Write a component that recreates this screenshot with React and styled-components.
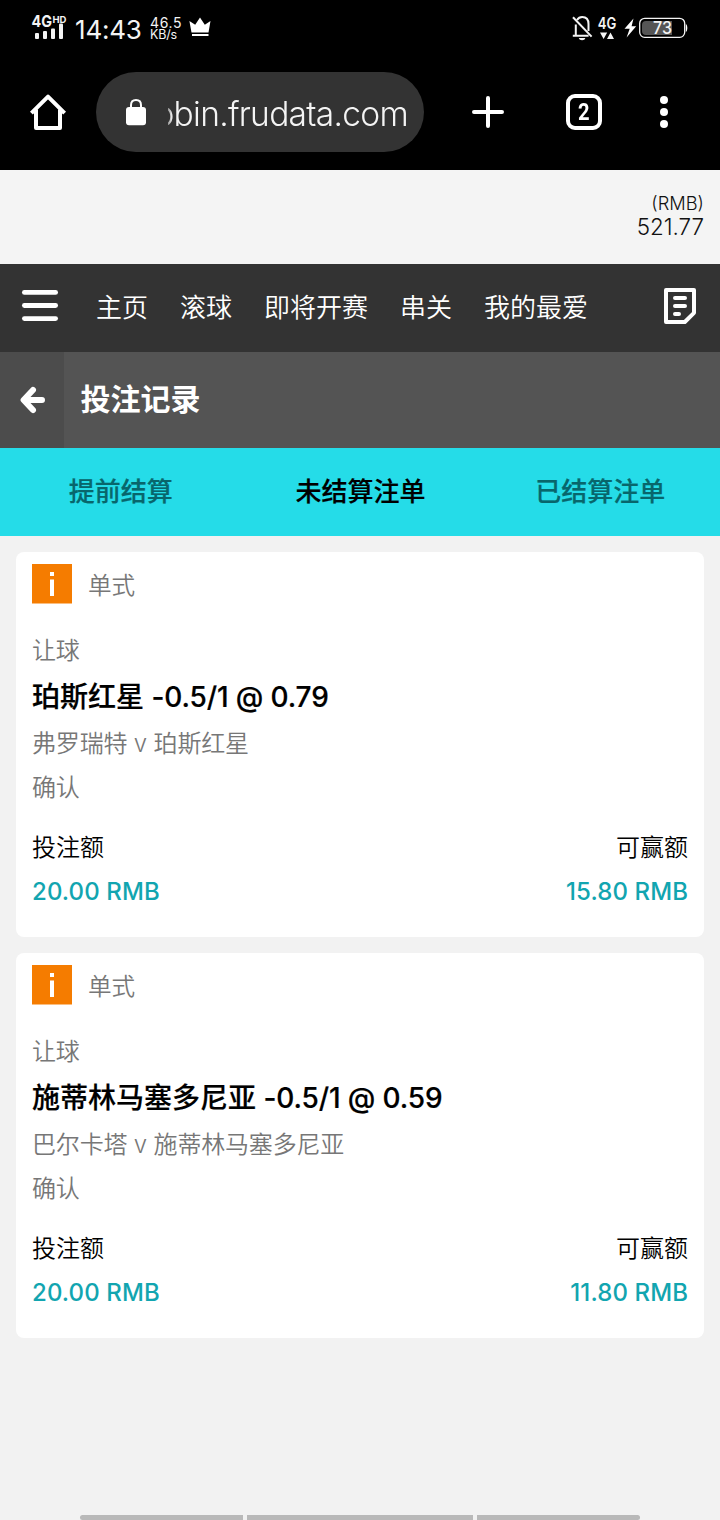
import React from "react";
import styled, { createGlobalStyle } from "styled-components";

const GlobalStyle = createGlobalStyle`
  *, *::before, *::after { box-sizing: border-box; }
  html, body { margin: 0; padding: 0; background: #f2f2f2; }
  body { font-family: Inter, "Noto Sans CJK SC", sans-serif; }
  svg { display: block; flex: none; overflow: visible; }
  button { border: 0; padding: 0; margin: 0; background: none; font: inherit; color: inherit; }
`;

const Screen = styled.div`
  width: 720px;
  height: 1520px;
  display: flex;
  flex-direction: column;
  background: #f2f2f2;
  overflow: hidden;
`;

const StatusBar = styled.header`
  height: 56px;
  padding: 0 31px;
  display: flex;
  justify-content: space-between;
  align-items: center;
  background: #000;
  color: #f4f4f4;
`;

const StatusGroup = styled.div`
  display: flex;
  align-items: center;
  height: 56px;
`;

const PowerGroup = styled.div`
  display: flex;
  align-items: center;
  gap: 2px;
`;

const ConnectionGroup = styled.div`
  display: flex;
  align-items: center;
  gap: 4px;
  margin-right: 7px;
`;

const Clock = styled.time`
  width: 67px;
  margin: 3px 8px 0 8px;
  font-size: 26px;
  line-height: 32px;
  letter-spacing: -0.2px;
  white-space: nowrap;
`;

const Speed = styled.div`
  width: 33px;
  margin-right: 6px;
  display: flex;
  flex-direction: column;
  padding-top: 2px;
  line-height: 12.5px;
  white-space: nowrap;
`;

const SpeedValue = styled.span`
  font-size: 14px;
  letter-spacing: 0.6px;
`;

const SpeedUnit = styled.span`
  font-size: 12.5px;
  letter-spacing: -0.2px;
`;

const BrowserBar = styled.div`
  height: 114px;
  padding: 16px 32px 18px 24px;
  display: flex;
  align-items: center;
  background: #000;
  color: #fff;
`;

const IconButton = styled.button`
  flex: none;
  width: 48px;
  height: 48px;
  margin-right: ${(p) => p.$gap || 0}px;
  display: flex;
  align-items: center;
  justify-content: center;
`;

const AddressPill = styled.div`
  flex: none;
  width: 328px;
  height: 80px;
  margin-right: 40px;
  padding: 0 16px 0 29px;
  display: flex;
  align-items: center;
  border-radius: 40px;
  background: #333;
`;

const Url = styled.div`
  width: 240px;
  margin-left: 21px;
  display: flex;
  justify-content: flex-end;
  overflow: hidden;
  color: #f4f4f4;
  font-size: 33.5px;
  font-weight: 300;
  line-height: 44px;
  letter-spacing: -0.7px;
  padding-top: 4px;
  white-space: nowrap;
  mask-image: linear-gradient(to right, rgba(0, 0, 0, 0.5) 0, #000 4px);
`;

const Balance = styled.section`
  height: 94px;
  padding: 22px 16px 0;
  display: flex;
  flex-direction: column;
  align-items: flex-end;
  background: #f4f4f4;
  color: #111;
  font-weight: 300;
`;

const Currency = styled.span`
  font-size: 18.3px;
  line-height: 23px;
`;

const Amount = styled.span`
  font-size: 22.4px;
  line-height: 24px;
`;

const NavBar = styled.nav`
  height: 88px;
  padding: 0 24px 4px 22px;
  display: flex;
  align-items: center;
  background: #333;
  color: #fff;
`;

const NavLinks = styled.div`
  flex: 1;
  display: flex;
  gap: 32px;
  margin-left: 38px;
  padding-top: 4px;
`;

const NavLink = styled.a`
  font-size: 26px;
  font-weight: 350;
  line-height: 40px;
  white-space: nowrap;
`;

const TitleBar = styled.div`
  height: 96px;
  display: flex;
  background: #545454;
  color: #fff;
`;

const BackButton = styled.button`
  width: 64px;
  height: 96px;
  padding-left: 2px;
  display: flex;
  align-items: center;
  justify-content: center;
  background: #4c4c4c;
`;

const Title = styled.h1`
  margin: 0 0 0 16.5px;
  font-size: 30px;
  font-weight: 700;
  line-height: 94px;
`;

const Tabs = styled.div`
  height: 88px;
  padding-left: 1px;
  display: grid;
  grid-template-columns: repeat(3, 1fr);
  background: #25dce8;
`;

const Tab = styled.button`
  height: 87px;
  font-size: 26px;
  font-weight: 500;
  line-height: 87px;
  text-align: center;
  color: ${(p) => (p.$active ? "#000" : "#08666c")};
  -webkit-text-stroke: 0.2px currentColor;
`;

const BetList = styled.main`
  flex: 1;
  padding: 16px;
  display: flex;
  flex-direction: column;
  gap: 16px;
`;

const Card = styled.article`
  height: 385px;
  padding: 12px 16px 23px;
  border-radius: 8px;
  background: #fff;
`;

const CardHead = styled.div`
  height: 65px;
  display: flex;
  gap: 16px;
`;

const BetType = styled.span`
  color: #777;
  font-size: 23.6px;
  font-weight: 350;
  line-height: 43px;
`;

const Line = styled.div`
  height: 44px;
  color: #777;
  font-size: 24px;
  font-weight: 350;
  line-height: 44px;
  letter-spacing: -0.18px;
  white-space: nowrap;
`;

const Selection = styled.h2`
  height: 49px;
  margin: 0;
  color: #000;
  font-size: 28px;
  font-weight: 500;
  line-height: 49px;
  white-space: nowrap;
  -webkit-text-stroke: 0.2px currentColor;
`;

const Odds = styled.span`
  letter-spacing: -0.12px;
`;

const Stakes = styled.div`
  margin-top: 16px;
  display: flex;
  justify-content: space-between;
`;

const Stake = styled.div`
  display: flex;
  flex-direction: column;
  align-items: ${(p) => (p.$end ? "flex-end" : "flex-start")};
`;

const StakeLabel = styled.span`
  color: #000;
  font-size: 24px;
  font-weight: 350;
  line-height: 44px;
`;

const StakeValue = styled.span`
  color: #12a5b0;
  font-size: 24px;
  font-weight: 500;
  line-height: 44px;
  letter-spacing: 0.1px;
`;

const GestureBar = styled.footer`
  height: 5px;
  padding: 0 80px;
  display: grid;
  grid-template-columns: 163px 226px 163px;
  gap: 4px;
`;

const GestureSegment = styled.span`
  background: #b9b9b9;
  border-radius: ${(p) => p.$radius || "0"};
`;

const SignalIcon = () => (
  <svg width="36" height="28" viewBox="0 0 36 28" fill="#f4f4f4">
    <text x="0.5" y="13" fontFamily="Inter" fontSize="16.500" fontWeight="700" textLength="20.500" lengthAdjust="spacingAndGlyphs">4G</text>
    <text x="21.500" y="8.500" fontFamily="Inter" fontSize="9.500" fontWeight="700" textLength="14" lengthAdjust="spacingAndGlyphs">HD</text>
    <rect x="4" y="19" width="4" height="6" rx="1" />
    <rect x="12" y="17" width="4" height="8" rx="1" />
    <rect x="20" y="14.500" width="4" height="10.500" rx="1" />
    <rect x="28" y="9.500" width="4" height="15.500" rx="1" />
  </svg>
);

const CrownIcon = () => (
  <svg width="24" height="22" viewBox="0 0 24 22" fill="#fff">
    <path d="M.4 4 6.200 7.800 11 .5l4.800 7.300L21.500 4l-2 11.500h-17z" />
    <rect x="3" y="17" width="16.500" height="2" />
  </svg>
);

const MuteIcon = () => (
  <svg width="21" height="26" viewBox="0 0 21 26" fill="none" stroke="#f4f4f4" strokeWidth="2">
    <path d="M.8 20.800h15.800M3.800 20.500V9.500M5 5C6.300 2.900 7.800 2 10.200 2c4 0 6.300 2.800 6.300 7v7" />
    <path d="M1 2.200 19.600 21.600" />
    <path d="M6.800 23h6.500c-.4 1.600-1.500 2.200-3.200 2.200S7.200 24.600 6.800 23z" fill="#f4f4f4" stroke="none" />
  </svg>
);

const NetworkIcon = () => (
  <svg width="20" height="26" viewBox="0 0 20 26" fill="#f4f4f4">
    <text x="0.800" y="14" fontFamily="Inter" fontSize="15.800" fontWeight="600" textLength="18.500" lengthAdjust="spacingAndGlyphs">4G</text>
    <path d="M3 17.500h7.200L6.600 24zM10 24h7l-3.500-6.500z" />
  </svg>
);

const BoltIcon = () => (
  <svg width="13" height="20" viewBox="0 0 13 20" fill="#fff">
    <path d="M9.500.500.500 10.800h5.200L2.600 19.500l9.600-11.300H7.600z" />
  </svg>
);

const BatteryIcon = () => (
  <svg width="50" height="22" viewBox="0 0 50 22">
    <rect x="0.700" y="1.300" width="45" height="19" rx="5" fill="none" stroke="#f4f4f4" strokeWidth="1.300" />
    <path d="M7 4h26v14H7a4 4 0 0 1-4-4V8a4 4 0 0 1 4-4z" fill="#555" />
    <path d="M46.800 7c2 1 2 7 0 8z" fill="#fff" />
    <text x="14" y="17" fontFamily="Inter" fontSize="17" fontWeight="450" fill="#f4f4f4" textLength="19" lengthAdjust="spacingAndGlyphs">73</text>
  </svg>
);

const HomeIcon = () => (
  <svg width="36" height="38" viewBox="0 0 36 38" fill="none" stroke="#fff" strokeWidth="4" strokeLinejoin="round">
    <path d="M1.400 20.200 18 3.600l16.600 16.600" />
    <path d="M6 16.500V35h24V16.500" />
  </svg>
);

const LockIcon = () => (
  <svg width="22" height="28" viewBox="0 0 22 28">
    <path d="M6 11V7.200C6 3.800 8 2 11 2s5 1.800 5 5.200V11" fill="none" stroke="#fff" strokeWidth="2" />
    <rect x="1" y="9" width="20" height="18.300" rx="3" fill="#fff" />
  </svg>
);

const PlusIcon = () => (
  <svg width="32" height="32" viewBox="0 0 32 32" stroke="#fff" strokeWidth="4" strokeLinecap="round">
    <path d="M16 2v28M2 16h28" />
  </svg>
);

const TabCount = styled.span`
  width: 36px;
  height: 36px;
  border: 4px solid #fff;
  border-radius: 9px;
  font-family: Roboto, sans-serif;
  font-size: 24px;
  font-weight: 700;
  line-height: 29px;
  text-align: center;
`;

const CountDigit = styled.span`
  display: inline-block;
  transform: scaleX(0.84);
`;

const MoreIcon = () => (
  <svg width="8" height="32" viewBox="0 0 8 32" fill="#fff">
    <circle cx="4" cy="4" r="4" />
    <circle cx="4" cy="16" r="4" />
    <circle cx="4" cy="28" r="4" />
  </svg>
);

const MenuIcon = () => (
  <svg width="36" height="34" viewBox="0 0 36 34" fill="#fff">
    <rect y="1" width="36" height="4.800" rx="2.400" />
    <rect y="14.100" width="36" height="4.800" rx="2.400" />
    <rect y="27.200" width="36" height="4.800" rx="2.400" />
  </svg>
);

const SlipIcon = () => (
  <svg width="32" height="36" viewBox="0 0 32 36" fill="none" stroke="#fff" strokeWidth="4">
    <path d="M2 2h28v22.800L20.800 34H2z" strokeLinejoin="round" />
    <path d="M11 10h10M11 18h10M11 26h4" strokeLinecap="round" />
  </svg>
);

const BackIcon = () => (
  <svg width="26" height="28" viewBox="0 0 26 28" fill="none" stroke="#fff" strokeWidth="6" strokeLinecap="round" strokeLinejoin="round">
    <path d="M13 4 3.600 14l9.400 10M4 14h18" />
  </svg>
);

const InfoIcon = () => (
  <svg width="40" height="40" viewBox="0 0 40 40">
    <rect width="40" height="39.500" fill="#f57c00" />
    <path d="M18 8h4v4h-4zM18 15.500h4V32h-4z" fill="#fff" />
  </svg>
);

const navItems = ["主页", "滚球", "即将开赛", "串关", "我的最爱"];

const tabs = [
  { label: "提前结算" },
  { label: "未结算注单", active: true },
  { label: "已结算注单" },
];

const bets = [
  { team: "珀斯红星", odds: "-0.5/1 @ 0.79", match: "弗罗瑞特 v 珀斯红星", stake: "20.00 RMB", win: "15.80 RMB" },
  { team: "施蒂林马塞多尼亚", odds: "-0.5/1 @ 0.59", match: "巴尔卡塔 v 施蒂林马塞多尼亚", stake: "20.00 RMB", win: "11.80 RMB" },
];

const BetCard = ({ bet }) => (
  <Card>
    <CardHead>
      <InfoIcon />
      <BetType>单式</BetType>
    </CardHead>
    <Line>让球</Line>
    <Selection>{bet.team} <Odds>{bet.odds}</Odds></Selection>
    <Line>{bet.match}</Line>
    <Line>确认</Line>
    <Stakes>
      <Stake>
        <StakeLabel>投注额</StakeLabel>
        <StakeValue>{bet.stake}</StakeValue>
      </Stake>
      <Stake $end>
        <StakeLabel>可赢额</StakeLabel>
        <StakeValue>{bet.win}</StakeValue>
      </Stake>
    </Stakes>
  </Card>
);

export default function App() {
  return (
    <Screen>
      <GlobalStyle />
      <StatusBar>
        <StatusGroup>
          <SignalIcon />
          <Clock>14:43</Clock>
          <Speed>
            <SpeedValue>46.5</SpeedValue>
            <SpeedUnit>KB/s</SpeedUnit>
          </Speed>
          <CrownIcon />
        </StatusGroup>
        <StatusGroup>
          <ConnectionGroup>
            <MuteIcon />
            <NetworkIcon />
          </ConnectionGroup>
          <PowerGroup>
            <BoltIcon />
            <BatteryIcon />
          </PowerGroup>
        </StatusGroup>
      </StatusBar>
      <BrowserBar>
        <IconButton aria-label="Home" $gap={24}><HomeIcon /></IconButton>
        <AddressPill>
          <LockIcon />
          <Url>obin.frudata.com</Url>
        </AddressPill>
        <IconButton aria-label="New tab" $gap={48}><PlusIcon /></IconButton>
        <IconButton aria-label="Tabs" $gap={32}><TabCount><CountDigit>2</CountDigit></TabCount></IconButton>
        <IconButton aria-label="More"><MoreIcon /></IconButton>
      </BrowserBar>
      <Balance>
        <Currency>(RMB)</Currency>
        <Amount>521.77</Amount>
      </Balance>
      <NavBar>
        <MenuIcon />
        <NavLinks>
          {navItems.map((item) => <NavLink key={item}>{item}</NavLink>)}
        </NavLinks>
        <SlipIcon />
      </NavBar>
      <TitleBar>
        <BackButton aria-label="Back"><BackIcon /></BackButton>
        <Title>投注记录</Title>
      </TitleBar>
      <Tabs>
        {tabs.map((tab) => <Tab key={tab.label} $active={tab.active}>{tab.label}</Tab>)}
      </Tabs>
      <BetList>
        {bets.map((bet) => <BetCard key={bet.team} bet={bet} />)}
      </BetList>
      <GestureBar>
        <GestureSegment $radius="3px 0 0 3px" />
        <GestureSegment />
        <GestureSegment $radius="0 3px 3px 0" />
      </GestureBar>
    </Screen>
  );
}
